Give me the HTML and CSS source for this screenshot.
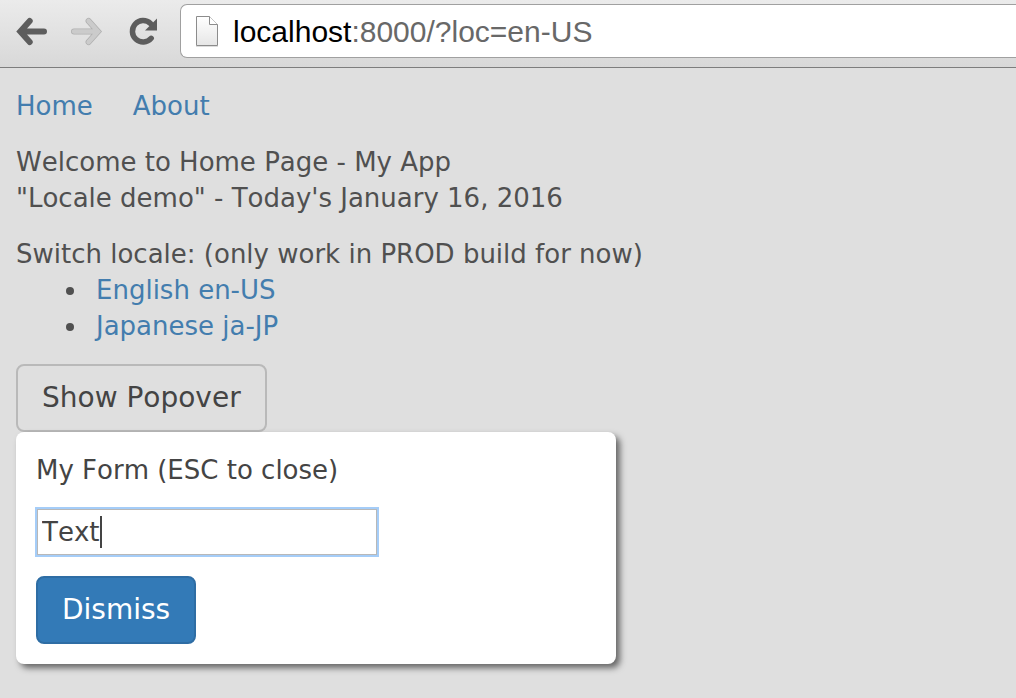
FILE: index.html
```html
<!DOCTYPE html>
<html lang="en-US">
<head>
<meta charset="utf-8">
<title>Home Page - My App</title>
<link rel="stylesheet" href="styles.css">
</head>
<body>
<header class="toolbar">
  <button class="tool" type="button" aria-label="Back">
    <svg width="32" height="28" viewBox="0 0 32 28"><path d="M28 14.500H6M13.700 4 4.300 14.500l9.400 10.500" fill="none" stroke="#5d5d5d" stroke-width="6" stroke-linecap="round" stroke-linejoin="miter"/></svg>
  </button>
  <button class="tool" type="button" aria-label="Forward" disabled>
    <svg width="32" height="28" viewBox="0 0 32 28"><path d="M2 14.500h22M16.600 4 26 14.500 16.600 25" fill="none" stroke="#b0b0b0" stroke-width="6" stroke-linecap="round"/><path d="M2 14.500h22M16.600 4 26 14.500 16.600 25" fill="none" stroke="#cbcbcb" stroke-width="4.500" stroke-linecap="round"/></svg>
  </button>
  <button class="tool reload" type="button" aria-label="Reload">
    <svg width="28" height="28" viewBox="0 0 28 28"><path d="M23.200 21.300A10.700 10.700 0 1 1 22.500 6.500" fill="none" stroke="#5d5d5d" stroke-width="5.500" stroke-linecap="round"/><path d="M29 1.500v12H17z" fill="#5d5d5d"/></svg>
  </button>
  <div class="address">
    <svg class="page-icon" width="24" height="32" viewBox="0 0 24 32"><defs><linearGradient id="sheet" x2="0" y2="1"><stop stop-color="#fff"/><stop offset="1" stop-color="#e6e6e6"/></linearGradient></defs><path d="M1 31.500h22" stroke="#ddd"/><path d="M1.500 1.500h13l8 8v21h-21z" fill="url(#sheet)" stroke="#8c8c8c"/><path d="M14.500 1.500v8h8" fill="#fff" stroke="#8c8c8c"/></svg>
    <span class="url"><span class="host">localhost</span>:8000/?loc=en-US</span>
  </div>
</header>
<main class="page">
  <nav class="nav"><a href="#home">Home</a><a href="#about">About</a></nav>
  <p class="text">Welcome to Home Page - My App<br>"Locale demo" - Today's January 16, 2016</p>
  <section class="text">
    Switch locale: (only work in PROD build for now)
    <ul class="locales">
      <li><a href="?loc=en-US">English en-US</a></li>
      <li><a href="?loc=ja-JP">Japanese ja-JP</a></li>
    </ul>
  </section>
  <button class="button" type="button">Show Popover</button>
  <form class="popover">
    <label class="label" for="field">My Form (ESC to close)</label>
    <div class="field">
      <input class="input" id="field" type="text" value="Text">
      <span class="caret"></span>
    </div>
    <button class="button primary" type="button">Dismiss</button>
  </form>
</main>
</body>
</html>
```
FILE: styles.css
```css
* { box-sizing: border-box; }
body {
  margin: 0;
  background: #dfdfdf;
  color: #505050;
  font: 26px/36px "DejaVu Sans", Verdana, sans-serif;
  font-kerning: none;
}
a { color: #437dae; text-decoration: none; }
.toolbar {
  display: flex;
  align-items: center;
  height: 68px;
  padding: 4px 0 9px 16px;
  gap: 24px;
  background: linear-gradient(#ebebeb, #d8d8d8);
  border-bottom: 1px solid #7d7d7d;
}
.tool { display: flex; padding: 0; border: 0; background: none; }
.tool svg { overflow: visible; }
.address {
  flex: 1;
  display: flex;
  align-items: center;
  gap: 14px;
  height: 54px;
  padding-left: 14px;
  background: #fff;
  border: 1px solid #a0a0a0;
  border-right: 0;
  border-radius: 7px 0 0 7px;
}
.url {
  padding-top: 2px;
  color: #686868;
  font-family: "Liberation Sans", Arial, sans-serif;
  font-size: 30px;
}
.host { color: #000; }
.page { padding: 20px 16px 34px; }
.nav { display: flex; gap: 40px; }
.text { margin: 20px 0; }
.locales { margin: 0; padding-left: 73px; }
.locales li { padding-left: 7px; }
.button {
  display: block;
  padding: 14px 24px;
  border: 2px solid #b9b9b9;
  border-radius: 8px;
  background: transparent;
  color: #444;
  font: inherit;
  font-size: 28px;
  font-kerning: none;
}
.popover {
  max-width: 600px;
  padding: 20px;
  border-radius: 8px;
  background: #fff;
  box-shadow: 4px 4px 6px #666;
  color: #444;
}
.label { display: block; }
.field { position: relative; margin: 20px 0; }
.input {
  display: block;
  width: 342px;
  height: 48px;
  padding: 0 5px;
  border: 1px solid #a5cdf8;
  outline: 2px solid #a5cdf8;
  outline-offset: -1px;
  box-shadow: inset 0 0 0 1px #b8b8b8;
  background: #fff;
  color: #444;
  font: inherit;
  font-kerning: none;
}
.caret { position: absolute; left: 64px; top: 8px; width: 2px; height: 32px; background: #444; }
.primary { border-color: #2e6da4; background: #337ab7; color: #fff; }
```
